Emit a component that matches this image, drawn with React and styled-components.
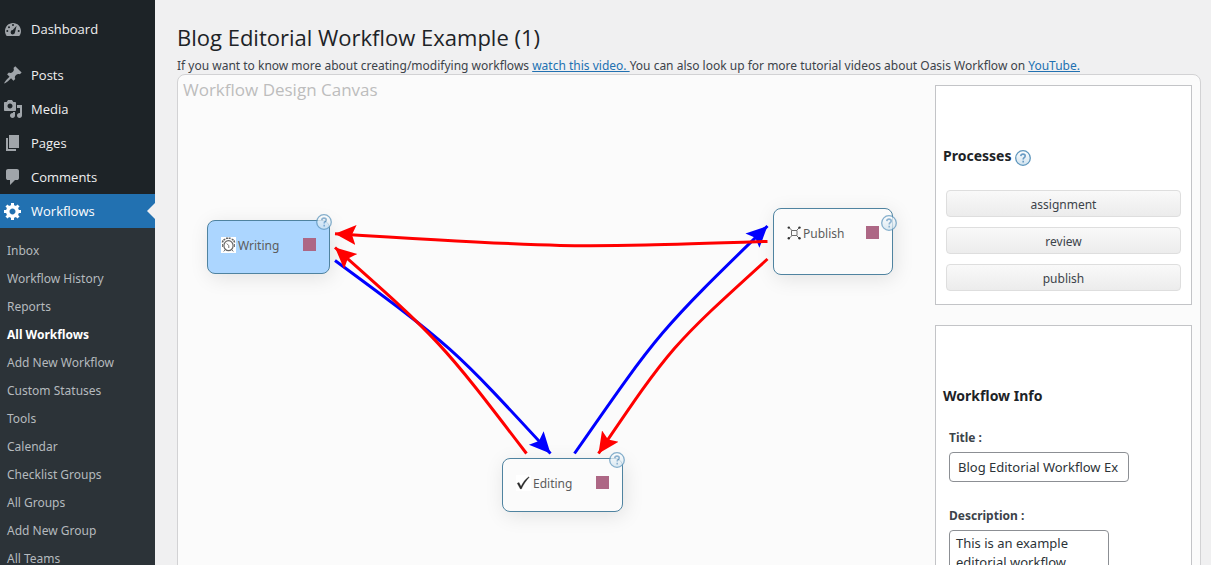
import React from "react";
import styled, { createGlobalStyle, css } from "styled-components";

const GlobalStyle = createGlobalStyle`
  *, *::before, *::after { box-sizing: border-box; }
  body {
    margin: 0;
    background: #f0f0f1;
    color: #3c434a;
    font-family: "Noto Sans", "Open Sans", sans-serif;
    font-size: 12px;
    line-height: 18px;
  }
`;

const displayFont = css`
  font-family: "Open Sans", "Noto Sans", sans-serif;
`;

const Shell = styled.div`
  display: flex;
  height: 100vh;
  overflow: hidden;
`;

const Sidebar = styled.nav`
  flex: 0 0 155px;
  background: #1d2327;
  padding-top: 12px;
`;

const MenuList = styled.ul`
  list-style: none;
  margin: 0;
  padding: 0;
`;

const MenuSeparator = styled.li`
  height: 12px;
`;

const MenuLink = styled.a`
  ${displayFont}
  position: relative;
  display: flex;
  align-items: center;
  gap: 8px;
  height: 34px;
  padding-left: 3px;
  color: ${(p) => (p.$current ? "#fff" : "#f0f0f1")};
  background: ${(p) => (p.$current ? "#2271b1" : "transparent")};
  font-size: 13px;
  text-decoration: none;

  svg {
    width: 20px;
    height: 20px;
    fill: ${(p) => (p.$current ? "#fff" : "#a0a5aa")};
  }

  ${(p) =>
    p.$current &&
    css`
      &::after {
        content: "";
        position: absolute;
        right: 0;
        top: 9px;
        border: 8px solid transparent;
        border-right-color: #f0f0f1;
        border-left-width: 0;
      }
    `}
`;

const SubMenu = styled.ul`
  list-style: none;
  margin: 0;
  padding: 9px 0;
  background: #2c3338;
`;

const SubLink = styled.a`
  display: block;
  height: 28px;
  padding-left: 7px;
  line-height: 28px;
  text-decoration: none;
  white-space: nowrap;
  color: ${(p) => (p.$current ? "#fff" : "#b5babe")};
  font-weight: ${(p) => (p.$current ? 700 : 400)};
`;

const Main = styled.main`
  flex: 1;
  min-width: 0;
  display: flex;
  flex-direction: column;
  padding: 23px 10px 0 22px;
`;

const PageTitle = styled.h1`
  ${displayFont}
  margin: 0;
  color: #1d2327;
  font-size: 22px;
  font-weight: 400;
  line-height: 28px;
`;

const Intro = styled.p`
  margin: 7px 0 0;
  line-height: 16px;
  white-space: nowrap;

  a { color: #2271b1; }
`;

const Canvas = styled.section`
  position: relative;
  flex: 1 0 600px;
  display: flex;
  justify-content: space-between;
  align-items: flex-start;
  padding: 0 8px 0 5px;
  border: 1px solid #d2d2d4;
  border-radius: 8px;
  background: #fbfbfb;
`;

const CanvasTitle = styled.h2`
  ${displayFont}
  margin: 3px 0 0;
  color: #bdbdbd;
  font-size: 17px;
  font-weight: 400;
  line-height: 24px;
`;

const Connections = styled.svg`
  position: absolute;
  left: 0;
  top: 0;
  pointer-events: none;
  fill: none;
`;

const Node = styled.div`
  position: absolute;
  left: ${(p) => p.$x}px;
  top: ${(p) => p.$y}px;
  width: ${(p) => p.$w}px;
  height: ${(p) => p.$h}px;
  display: flex;
  align-items: flex-start;
  padding: 16px 13px;
  border: 1px solid #4f83a0;
  border-radius: 8px;
  background: ${(p) => (p.$active ? "#acd6ff" : "#fbfbfb")};
  box-shadow: 2px 4px 20px rgba(0, 0, 0, 0.1);

  > svg { flex: none; margin-right: 1px; }
`;

const NodeLabel = styled.span`
  flex: 1;
  color: #5c5c5c;
`;

const NodeHandle = styled.span`
  flex: none;
  width: 13px;
  height: 13px;
  margin-top: 1px;
  background: #ad6785;
`;

const NodeHelp = styled.span`
  position: absolute;
  right: ${(p) => (p.$low ? -5 : -3)}px;
  top: ${(p) => (p.$low ? 6 : -7)}px;
  display: flex;
  opacity: 0.75;
`;

const SidePanels = styled.aside`
  position: relative;
  display: flex;
  flex-direction: column;
  gap: 20px;
  flex: 0 0 257px;
  padding-top: 10px;
`;

const Panel = styled.section`
  padding: 58px 10px 13px 7px;
  border: 1px solid #c3c4c7;
  background: #fff;
`;

const PanelTitle = styled.h3`
  display: flex;
  align-items: center;
  gap: 4px;
  margin: 0;
  color: #1d2327;
  font-size: 14px;
  font-weight: 700;
  line-height: 24px;

  svg { margin-top: 4px; }
`;

const ProcessList = styled.div`
  display: flex;
  flex-direction: column;
  gap: 10px;
  padding: 22px 0 0 3px;
`;

const ProcessButton = styled.button`
  height: 27px;
  padding: 2px 0 0;
  border: 1px solid #dedede;
  border-radius: 4px;
  background: linear-gradient(#f9f9f9, #ececec);
  color: #3c434a;
  font: inherit;
`;

const Field = styled.div`
  display: flex;
  flex-direction: column;
  align-items: flex-start;
  gap: 5px;
  padding-left: 6px;
  margin-top: ${(p) => (p.$first ? 21 : 25)}px;
`;

const FieldLabel = styled.label`
  font-weight: 700;
`;

const controlStyle = css`
  border: 1px solid #8c8f94;
  border-radius: 4px;
  background: #fff;
  color: #2c3338;
  font: inherit;
  font-size: 13px;
`;

const TextInput = styled.input`
  ${controlStyle}
  width: 180px;
  height: 30px;
  padding: 0 8px;
`;

const TextArea = styled.textarea`
  ${controlStyle}
  width: 160px;
  height: 90px;
  padding: 3px 6px;
  line-height: 19px;
  resize: none;
  overflow: hidden;
`;

const HelpIcon = () => (
  <svg width="16" height="16" viewBox="0 0 16 16" aria-hidden="true">
    <defs>
      <linearGradient id="helpFill" x1="0" y1="0" x2="0" y2="1">
        <stop offset="0" stopColor="#ffffff" />
        <stop offset="1" stopColor="#cfe2ee" />
      </linearGradient>
    </defs>
    <circle cx="8" cy="8" r="7.3" fill="url(#helpFill)" stroke="#5e96bd" strokeWidth="1.3" />
    <path d="M5.8 6.1c.1-1.3 1-2 2.2-2s2.2.7 2.2 1.9c0 1.7-2 1.7-2 3.4M8.2 10.8v1.6" fill="none" stroke="#6a9cc4" strokeWidth="1.6" />
  </svg>
);

const ClockIcon = () => (
  <svg width="16" height="16" viewBox="0 0 16 16" aria-hidden="true">
    <path fill="#fff" d="M0 0h15v16H0z" />
    <g fill="none" stroke="#666">
      <ellipse cx="7.5" cy="8.7" rx="4.6" ry="5" strokeWidth="1.2" />
      <path d="M1.5 5.500C1.800 3.500 3 2.300 5 2M13.500 5.500C13.200 3.500 12 2.300 10 2M5 1.200h5" strokeWidth="1.6" strokeDasharray="2 .6" />
      <path d="M5.800 6.500l2 2.200V11M4 12.800l-1.300 1.700M11 12.800l1.300 1.700M1.500 7v3M13.500 7v3" strokeWidth=".9" />
    </g>
  </svg>
);

const CheckIcon = () => (
  <svg width="16" height="16" viewBox="0 0 16 16" aria-hidden="true">
    <path fill="#fff" d="M0 0h15v16H0z" />
    <path d="M1.200 8.300l1.800-.8 2 4C6.800 7.600 9.400 4.200 12.800 1.800l.4.500C10 5.700 7.400 9.500 5.400 14h-1z" fill="#2b2b2b" stroke="#2b2b2b" strokeWidth=".3" />
  </svg>
);

const NetworkIcon = () => (
  <svg width="15" height="16" viewBox="0 0 15 16" aria-hidden="true">
    <g stroke="#6d6d6d" fill="none">
      <path d="M4.500 5.500h5.500v5H4.500zM2 2.500l3 3M12.500 2.500l-3 3M2 13.500l3-3M12.500 13.500l-3-3" />
    </g>
    <g fill="#333">
      <circle cx="1.800" cy="2.600" r="1.200" />
      <circle cx="12.500" cy="2.600" r="1.200" />
      <circle cx="1.800" cy="13.200" r="1.200" />
      <circle cx="12.500" cy="13.200" r="1.200" />
    </g>
  </svg>
);

const menuPaths = {
  Dashboard:
    "M3.760 17h12.480c1.100-1.370 1.760-3.110 1.760-5 0-4.420-3.580-8-8-8s-8 3.580-8 8c0 1.890.66 3.630 1.760 5zM9 6a1 1 0 1 1 2 0a1 1 0 1 1-2 0zM5 8.200a1 1 0 1 1 2 0a1 1 0 1 1-2 0zM3.300 12a1 1 0 1 1 2 0a1 1 0 1 1-2 0zM14.700 12a1 1 0 1 1 2 0a1 1 0 1 1-2 0zM13.600 6.800L12 13.300a2.200 2.200 0 1 1-2.200-2.300z",
  Posts:
    "M10.440 3.020l1.820-1.820 6.360 6.350-1.830 1.820c-1.050-.68-2.480-.57-3.410.36l-.75.75c-.92.93-1.040 2.350-.35 3.410l-1.830 1.820-2.410-2.410-2.800 2.790c-.42.42-3.380 2.710-3.800 2.290s1.860-3.390 2.280-3.810l2.790-2.790L4.100 9.360l1.830-1.820c1.050.69 2.480.57 3.400-.36l.75-.75c.93-.92 1.050-2.350.36-3.410z",
  Media:
    "M13 11V4c0-.55-.45-1-1-1h-1.670L9 1H5L3.670 3H2c-.55 0-1 .45-1 1v7c0 .55.45 1 1 1h10c.55 0 1-.45 1-1zM7 4.500c1.380 0 2.500 1.120 2.500 2.500S8.380 9.500 7 9.500 4.500 8.380 4.500 7 5.620 4.500 7 4.500zM14 6h5v10.500c0 1.380-1.120 2.500-2.500 2.500S14 17.880 14 16.500s1.120-2.500 2.500-2.500c.17 0 .34.02.5.05V9h-3V6zm-4 8.050V13h2v3.500c0 1.380-1.120 2.500-2.500 2.500S7 17.880 7 16.500 8.120 14 9.500 14c.17 0 .34.02.5.05z",
  Pages: "M6 15V2h10v13H6zm-1 1h8v2H3V5h2v11z",
  Comments:
    "M5 2h9q.82 0 1.410.59T16 4v7q0 .82-.59 1.410T14 13h-2l-5 5v-5H5q-.82 0-1.410-.59T3 11V4q0-.82.59-1.410T5 2z",
  Workflows:
    "M18 12h-2.180c-.17.7-.44 1.350-.81 1.930l1.540 1.540-2.100 2.100-1.540-1.540c-.58.36-1.230.63-1.910.79V19H8v-2.180c-.68-.16-1.330-.43-1.910-.79l-1.540 1.540-2.120-2.120 1.540-1.540c-.36-.58-.63-1.230-.79-1.910H1V9.030h2.170c.16-.7.44-1.350.8-1.940L2.430 5.550l2.100-2.100 1.540 1.540c.58-.37 1.240-.64 1.930-.81V2h3v2.180c.68.16 1.330.43 1.910.79l1.540-1.540 2.120 2.120-1.540 1.540c.36.59.64 1.240.8 1.940H18V12zm-8.500 1.500c1.660 0 3-1.340 3-3s-1.340-3-3-3-3 1.340-3 3 1.340 3 3 3z",
};

const subItems = [
  "Inbox",
  "Workflow History",
  "Reports",
  "All Workflows",
  "Add New Workflow",
  "Custom Statuses",
  "Tools",
  "Calendar",
  "Checklist Groups",
  "All Groups",
  "Add New Group",
  "All Teams",
];

const nodes = [
  { label: "Writing", Icon: ClockIcon, x: 29, y: 145, w: 123, h: 54, active: true },
  { label: "Publish", Icon: NetworkIcon, x: 595, y: 133, w: 120, h: 67, low: true },
  { label: "Editing", Icon: CheckIcon, x: 324, y: 383, w: 121, h: 54 },
];

const links = [
  { color: "blue", d: "M157 185.500C274 271.600 274 271.600 372.500 378.500" },
  { color: "blue", d: "M396.500 378.500C482 255.500 482 255.500 589.500 151" },
  { color: "red", d: "M589.500 166.400C385 173 385 173 157 158.700" },
  { color: "red", d: "M348.500 378.500C262.500 266 262.500 266 157 172.500" },
  { color: "red", d: "M589.500 184C493.500 271 493.500 271 420.500 378.500" },
];

const MenuItem = ({ name, current }) => (
  <li>
    <MenuLink href="#" $current={current} aria-current={current ? "true" : undefined}>
      <svg viewBox="0 0 20 20" aria-hidden="true">
        <path fillRule="evenodd" d={menuPaths[name]} />
      </svg>
      {name}
    </MenuLink>
  </li>
);

export default function App() {
  return (
    <Shell>
      <GlobalStyle />
      <Sidebar aria-label="Main menu">
        <MenuList>
          <MenuItem name="Dashboard" />
          <MenuSeparator aria-hidden="true" />
          <MenuItem name="Posts" />
          <MenuItem name="Media" />
          <MenuItem name="Pages" />
          <MenuItem name="Comments" />
          <MenuItem name="Workflows" current />
        </MenuList>
        <SubMenu>
          {subItems.map((item) => (
            <li key={item}>
              <SubLink href="#" $current={item === "All Workflows"}>
                {item}
              </SubLink>
            </li>
          ))}
        </SubMenu>
      </Sidebar>
      <Main>
        <PageTitle>Blog Editorial Workflow Example (1)</PageTitle>
        <Intro>
          If you want to know more about creating/modifying workflows <a href="#">watch this video. </a>
          You can also look up for more tutorial videos about Oasis Workflow on <a href="#">YouTube.</a>
        </Intro>
        <Canvas>
          <CanvasTitle>Workflow Design Canvas</CanvasTitle>
          {nodes.map(({ label, Icon, x, y, w, h, active, low }) => (
            <Node key={label} $x={x} $y={y} $w={w} $h={h} $active={active}>
              <Icon />
              <NodeLabel>{label}</NodeLabel>
              <NodeHandle />
              <NodeHelp $low={low}>
                <HelpIcon />
              </NodeHelp>
            </Node>
          ))}
          <Connections width="740" height="480" viewBox="0 0 740 480" aria-hidden="true">
            <defs>
              {["red", "blue"].map((color) => (
                <marker
                  key={color}
                  id={`head-${color}`}
                  markerUnits="userSpaceOnUse"
                  markerWidth="22"
                  markerHeight="22"
                  refX="21"
                  refY="11"
                  orient="auto"
                >
                  <path d="M21 11L0 1L4 11L0 21z" fill={color} />
                </marker>
              ))}
            </defs>
            {links.map(({ color, d }) => (
              <path key={d} d={d} stroke={color} strokeWidth="3" markerEnd={`url(#head-${color})`} />
            ))}
          </Connections>
          <SidePanels>
            <Panel>
              <PanelTitle>
                Processes <HelpIcon />
              </PanelTitle>
              <ProcessList>
                <ProcessButton type="button">assignment</ProcessButton>
                <ProcessButton type="button">review</ProcessButton>
                <ProcessButton type="button">publish</ProcessButton>
              </ProcessList>
            </Panel>
            <Panel>
              <PanelTitle>Workflow Info</PanelTitle>
              <Field $first>
                <FieldLabel htmlFor="wf-title">Title :</FieldLabel>
                <TextInput id="wf-title" type="text" defaultValue="Blog Editorial Workflow Ex" />
              </Field>
              <Field>
                <FieldLabel htmlFor="wf-description">Description :</FieldLabel>
                <TextArea id="wf-description" defaultValue={"This is an example editorial workflow."} />
              </Field>
            </Panel>
          </SidePanels>
        </Canvas>
      </Main>
    </Shell>
  );
}
